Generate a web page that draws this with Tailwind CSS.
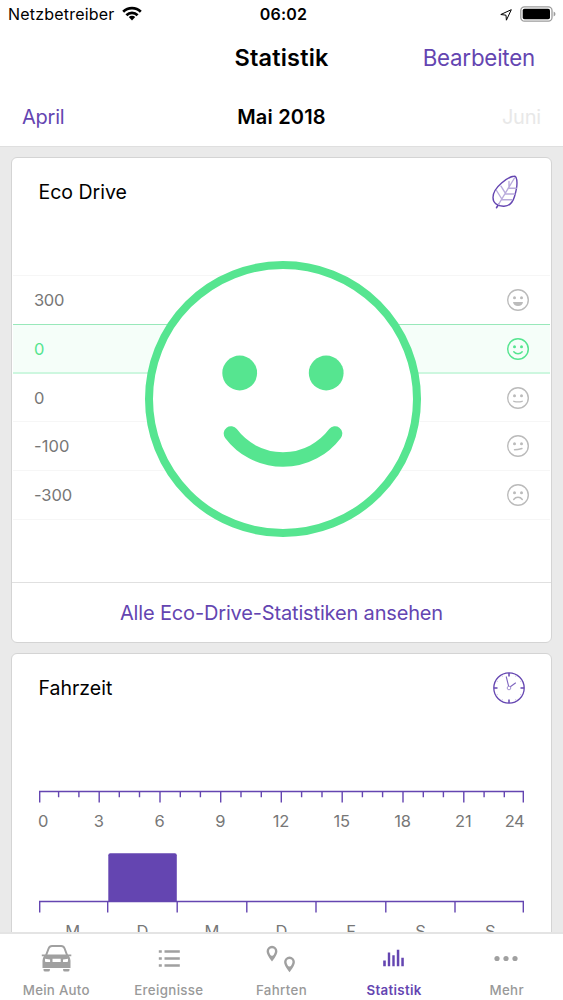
<!DOCTYPE html>
<html lang="de">
<head>
<meta charset="utf-8">
<title>Statistik</title>
<script src="https://cdn.jsdelivr.net/npm/@tailwindcss/browser@4"></script>
</head>
<body class="bg-[#eaeaea] font-['Inter',sans-serif] text-black">
<div class="flex h-[1000px] w-[563px] flex-col overflow-hidden">

  <header class="h-[147px] shrink-0 border-b border-[#dfdfdf] bg-white">
    <div class="grid h-[29px] grid-cols-3 items-center">
      <div class="flex items-center gap-[7px] pl-[8px] text-[16px] leading-[29px] tracking-[0.2px]">
        <span>Netzbetreiber</span>
        <svg class="-mt-[2px] h-[15px] w-[20px]" viewBox="0 0 20 15" fill="none" stroke="#000" stroke-width="2.7">
          <path d="M1.2 5.7a12.6 12.6 0 0 1 17.6 0"/>
          <path d="M4.4 9.2a8 8 0 0 1 11.2 0"/>
          <path d="M10 14.4l-3.2-3.3a4.6 4.6 0 0 1 6.4 0z" fill="#000" stroke="none"/>
        </svg>
      </div>
      <div class="pl-[4px] text-center text-[16px] font-semibold leading-[29px] tracking-[0.25px]">06:02</div>
      <div class="flex items-center justify-end gap-[7px] pr-[7px]">
        <svg class="h-[14px] w-[14px]" viewBox="0 0 14 14" fill="none" stroke="#000" stroke-width="1"><path d="M12.300 1.700L1.800 6.500 7 7.200 7.400 12.200z"/></svg>
        <svg class="-mt-px h-[16px] w-[36px]" viewBox="0 0 36 16"><rect x=".8" y=".8" width="31.2" height="14.4" rx="3.6" fill="none" stroke="#9c9c9c" stroke-width="1.3"/><rect x="2.7" y="2.7" width="27.3" height="10.6" rx="1.8"/><path d="M33.6 5.4q1.9.8 1.9 2.6t-1.9 2.6z" fill="#9c9c9c"/></svg>
      </div>
    </div>
    <div class="grid h-[57px] grid-cols-3 items-center">
      <div></div>
      <h1 class="text-center text-[23.5px] font-semibold leading-[57px] tracking-[0.2px]">Statistik</h1>
      <div class="pr-[28px] text-right text-[22.3px] leading-[57px] tracking-[-0.2px] text-[#6445b1]">Bearbeiten</div>
    </div>
    <div class="grid h-[60px] grid-cols-3 items-center pt-[1px] text-[20px] leading-[60px]">
      <div class="pl-[22px] tracking-[-0.25px] text-[#6445b1]">April</div>
      <div class="text-center font-semibold tracking-[0.2px]">Mai 2018</div>
      <div class="pr-[22px] text-right tracking-[-0.2px] text-[#e8e8e8]">Juni</div>
    </div>
  </header>

  <main class="flex min-h-0 flex-1 flex-col gap-[10px] overflow-hidden px-[11px] pt-[10px]">
    <section class="relative flex h-[486px] shrink-0 flex-col rounded-[6px] border border-[#d4d4d4] bg-white">
      <div class="flex h-[117px] items-start justify-between pl-[26.5px] pr-[30.5px]">
        <h2 class="pt-[19px] text-[19.5px] leading-[30px]">Eco Drive</h2>
        <svg class="mt-[17px] h-[34px] w-[30px]" viewBox="0 0 30 34" fill="none" stroke="#6445b1" stroke-width="1.400" stroke-linecap="round">
          <path d="M22.800 1.200C18 1.600 2 12 2 22.500c0 5.500 4.500 8.500 10.500 8.700 5.500.2 9.200-3.500 11-9.700C25.500 15 27 7 25 2.300 24.500 1.400 23.700 1.100 22.800 1.200z"/>
          <path d="M7.500 29.300L5.600 32.700" stroke-width="1.700"/>
          <path d="M7.500 29.500L23.500 3M18 12V6.500M14 17.700l-4-6.500M10.800 24L5.500 15.500M17 13.300h8.300M13.800 19h10M10.500 24.700H21" stroke="#b9abdc"/>
        </svg>
      </div>
      <div class="mx-px flex flex-col text-[16.5px] leading-[24px] text-[#777]">
        <div class="flex h-[49px] items-center justify-between border-t border-[#f6f6f6] pl-[21px] pr-[20.5px]">
          <span class="tracking-[-0.35px]">300</span>
          <svg class="h-[24px] w-[24px]" viewBox="-12 -12 24 24" fill="none" stroke="#bbb" stroke-width="1.400" stroke-linecap="round"><circle r="10.300"/><circle cx="-3.500" cy="-2.300" r="1.500" fill="#bbb" stroke="none"/><circle cx="3.500" cy="-2.300" r="1.500" fill="#bbb" stroke="none"/><path d="M-5 2H5q-.6 4-5 4t-5-4z" fill="#bbb" stroke="none"/></svg>
        </div>
        <div class="flex h-[50px] items-center justify-between border-b-2 border-t border-b-[#cdf7df] border-t-[#98e8ba] bg-[#f5fef9] pl-[21px] pr-[20.5px] text-[#56e590]">
          <span>0</span>
          <svg class="h-[24px] w-[24px]" viewBox="-12 -12 24 24" fill="none" stroke="#56e590" stroke-width="1.500" stroke-linecap="round"><circle r="10.300"/><circle cx="-3.500" cy="-2.300" r="1.500" fill="#56e590" stroke="none"/><circle cx="3.500" cy="-2.300" r="1.500" fill="#56e590" stroke="none"/><path d="M-4.200 2.800a5.300 5.300 0 0 0 8.400 0"/></svg>
        </div>
        <div class="flex h-[47px] items-center justify-between pl-[21px] pr-[20.5px]">
          <span>0</span>
          <svg class="h-[24px] w-[24px]" viewBox="-12 -12 24 24" fill="none" stroke="#bbb" stroke-width="1.400" stroke-linecap="round"><circle r="10.300"/><circle cx="-3.500" cy="-2.300" r="1.500" fill="#bbb" stroke="none"/><circle cx="3.500" cy="-2.300" r="1.500" fill="#bbb" stroke="none"/><path d="M-4.200 3.300q4.200 1.200 8.400 0"/></svg>
        </div>
        <div class="flex h-[49px] items-center justify-between border-t border-[#f6f6f6] pl-[21px] pr-[20.5px]">
          <span class="tracking-[0.1px]">-100</span>
          <svg class="h-[24px] w-[24px]" viewBox="-12 -12 24 24" fill="none" stroke="#bbb" stroke-width="1.400" stroke-linecap="round"><circle r="10.300"/><circle cx="-3.500" cy="-2.300" r="1.500" fill="#bbb" stroke="none"/><circle cx="3.500" cy="-2.300" r="1.500" fill="#bbb" stroke="none"/><path d="M-3.500 3.800q3-.1 7.500-1.300"/></svg>
        </div>
        <div class="flex h-[50px] items-center justify-between border-y border-[#f6f6f6] pl-[21px] pr-[20.5px]">
          <span class="tracking-[-0.05px]">-300</span>
          <svg class="h-[24px] w-[24px]" viewBox="-12 -12 24 24" fill="none" stroke="#bbb" stroke-width="1.400" stroke-linecap="round"><circle r="10.300"/><circle cx="-3.500" cy="-2.300" r="1.500" fill="#bbb" stroke="none"/><circle cx="3.500" cy="-2.300" r="1.500" fill="#bbb" stroke="none"/><path d="M-4.300 4.500a5.300 5.300 0 0 1 8.600 0"/></svg>
        </div>
      </div>
      <div class="mt-auto flex h-[60px] items-center justify-center border-t border-[#e0e0e0] text-[20px] leading-[30px] tracking-[-0.16px] text-[#6445b1]">Alle Eco-Drive-Statistiken ansehen</div>
      <svg class="absolute left-[133px] top-[103px] h-[276px] w-[276px]" viewBox="-138 -138 276 276" fill="none" stroke="#56e590">
        <circle r="134" fill="#fff" stroke-width="8"/>
        <circle cx="-43.300" cy="-26" r="17.400" fill="#56e590" stroke="none"/>
        <circle cx="43.200" cy="-26" r="17.400" fill="#56e590" stroke="none"/>
        <path d="M-52 34.500a65 65 0 0 0 104 0" stroke-width="14.600" stroke-linecap="round"/>
      </svg>
    </section>

    <section class="flex h-[340px] shrink-0 flex-col rounded-t-[6px] border border-[#d4d4d4] bg-white">
      <div class="flex h-[136px] items-start justify-between pl-[26.5px] pr-[25px]">
        <h2 class="pt-[19px] text-[19.5px] leading-[30px]">Fahrzeit</h2>
        <svg class="mt-[17px] h-[34px] w-[34px]" viewBox="-17 -17 34 34" fill="none" stroke="#6445b1" stroke-width="1.300">
          <circle r="15.200"/>
          <path d="M0-15v3.500M0 15v-3.500M-15 0h3.500M15 0h-3.500" stroke-width="1.500"/>
          <path d="M7.300-12.600l-.7 1.200M12.600-7.300l-1.200.7M12.600 7.300l-1.200-.7M7.300 12.600l-.7-1.200M-7.300 12.600l.7-1.200M-12.600 7.300l1.200-.7M-12.600-7.300l1.200.7M-7.300-12.600l.7 1.200" stroke="#b9abdc" stroke-width="1"/>
          <circle r="1.800" stroke="#9c88cd" stroke-width=".9"/>
          <path d="M-.4-1.800L-2.800-11.500M1.300-1.300L6.800-5.300" stroke="#7e65bf" stroke-width="1.100"/>
        </svg>
      </div>
      <svg class="ml-[27px] h-[14px] w-[486px] shrink-0" viewBox="0 0 486 14" fill="none" stroke="#6445b1" stroke-width="1.400">
        <path d="M.700 12.500V1.500H484.300V12.500M60.200 1.500v11M121 1.500v11M181.700 1.500v11M242.300 1.500v11M303.200 1.500v11M364 1.500v11M424.800 1.500v11"/>
        <path d="M19.600 1.500v5.800M39.900 1.500v5.800M80.300 1.500v5.800M100.500 1.500v5.800M141.300 1.500v5.800M161.400 1.500v5.800M202 1.500v5.800M222.300 1.500v5.800M262.600 1.500v5.800M283 1.500v5.800M323.400 1.500v5.800M343.600 1.500v5.800M384.300 1.500v5.800M404.400 1.500v5.800M445.100 1.500v5.800M465.300 1.500v5.800"/>
      </svg>
      <div class="ml-[26px] mr-[27px] grid h-[32px] shrink-0 grid-cols-[1fr_2fr_2fr_2fr_2fr_2fr_2fr_2fr_1fr] pt-[1px] text-center text-[16.500px] leading-[32px] tracking-[-0.2px] text-[#777]">
        <div class="text-left">0</div><div>3</div><div>6</div><div>9</div><div>12</div><div>15</div><div>18</div><div>21</div><div class="text-right tracking-[-0.6px]">24</div>
      </div>
      <svg class="ml-[27px] mt-[16px] h-[62px] w-[486px] shrink-0" viewBox="0 0 486 62" fill="none" stroke="#6445b1" stroke-width="1.400">
        <path d="M69.300 49.500V3.200a2 2 0 0 1 2-2h64.500a2 2 0 0 1 2 2v46.300z" fill="#6445b1" stroke="none"/>
        <path d="M.700 60.500V49.500H484.300V60.500M68.700 49.500v11M138.200 49.500v11M207.800 49.500v11M277 49.500v11M346.800 49.500v11M416 49.500v11"/>
      </svg>
      <div class="ml-[26px] mr-[26px] grid shrink-0 grid-cols-7 pt-[2px] text-center text-[16.500px] leading-[30px] text-[#777]">
        <div>M</div><div>D</div><div>M</div><div>D</div><div>F</div><div>S</div><div>S</div>
      </div>
    </section>
  </main>

  <nav class="grid h-[68px] shrink-0 grid-cols-5 border-t-2 border-[#e4e4e4] bg-white text-center text-[13.300px] font-medium leading-[18px] text-[#999]">
    <div class="flex flex-col items-center">
      <svg class="mt-[8px] h-[34px] w-[32px]" viewBox="0 0 32 34" fill="#a0a0a0">
        <path d="M6 13.500L8.600 6.500Q9.600 4 12 4h9.200Q23.600 4 24.600 6.500L27.200 13.500" fill="none" stroke="#a0a0a0" stroke-width="2"/>
        <path fill-rule="evenodd" d="M1.800 12.500h29.500v1.700h-2.200q1.400 2 1.400 4.300v7.500h-28V18.500q0-2.300 1.400-4.300H1.800zM5 16.700v2.300q0 .9.900.9h4.200v-2.500zM12.500 16.700v3.200h8.200v-3.200zM28 16.700l-5 .7v2.500h4.100q.9 0 .9-.9z"/>
        <path d="M3.500 27h6.400v1q0 1.600-1.600 1.600h-3.200q-1.600 0-1.600-1.600zM23.100 27h6.400v1q0 1.600-1.600 1.600h-3.200q-1.600 0-1.600-1.600z"/>
      </svg>
      <span class="mt-[5px] tracking-[0.250px]">Mein Auto</span>
    </div>
    <div class="flex flex-col items-center">
      <svg class="mt-[8px] h-[34px] w-[24px]" viewBox="0 0 24 34" fill="#a0a0a0"><path d="M1.800 8.200h3v2.600h-3zM7.500 8.200h15.300v2.600H7.500zM1.800 15.200h3v2.600h-3zM7.500 15.200h15.300v2.600H7.500zM1.800 22.200h3v2.600h-3zM7.500 22.200h15.300v2.600H7.500z"/></svg>
      <span class="mt-[5px] tracking-[0.350px]">Ereignisse</span>
    </div>
    <div class="flex flex-col items-center">
      <svg class="mt-[8px] h-[34px] w-[32px]" viewBox="0 0 32 34" fill="none" stroke="#a0a0a0" stroke-width="2.400"><path d="M7 17.500Q2.800 12 2.800 9.200a4.200 4.200 0 0 1 8.400 0Q11.200 12 7 17.500z"/><path d="M7 18l-3-5.200q3 1.700 6 0z" fill="#a0a0a0" stroke="none"/><path d="M24.500 28.300Q20.300 22.800 20.300 20a4.200 4.200 0 0 1 8.400 0Q28.700 22.800 24.500 28.300z"/><path d="M24.500 28.800l-3-5.200q3 1.700 6 0z" fill="#a0a0a0" stroke="none"/></svg>
      <span class="mt-[5px] tracking-[0.350px]">Fahrten</span>
    </div>
    <div class="flex flex-col items-center text-[#6445b1]">
      <svg class="mt-[8px] h-[34px] w-[24px]" viewBox="0 0 24 34" fill="#6445b1"><path d="M1.200 18.500h2.600v5.800H1.200zM5.800 10.500h2.400v13.800H5.800zM10.300 13.200h2.400v11.100h-2.400zM14.800 7.700h2.500v16.600h-2.500zM19.300 15.800h2.500v8.500h-2.500z"/></svg>
      <span class="mt-[5px] font-semibold tracking-[0.300px]">Statistik</span>
    </div>
    <div class="flex flex-col items-center">
      <svg class="mt-[8px] h-[34px] w-[26px]" viewBox="0 0 26 34" fill="#a0a0a0"><circle cx="3" cy="16.500" r="2.600"/><circle cx="12" cy="16.500" r="2.600"/><circle cx="21" cy="16.500" r="2.600"/></svg>
      <span class="mt-[5px] tracking-[0.350px]">Mehr</span>
    </div>
  </nav>
</div>
</body>
</html>
